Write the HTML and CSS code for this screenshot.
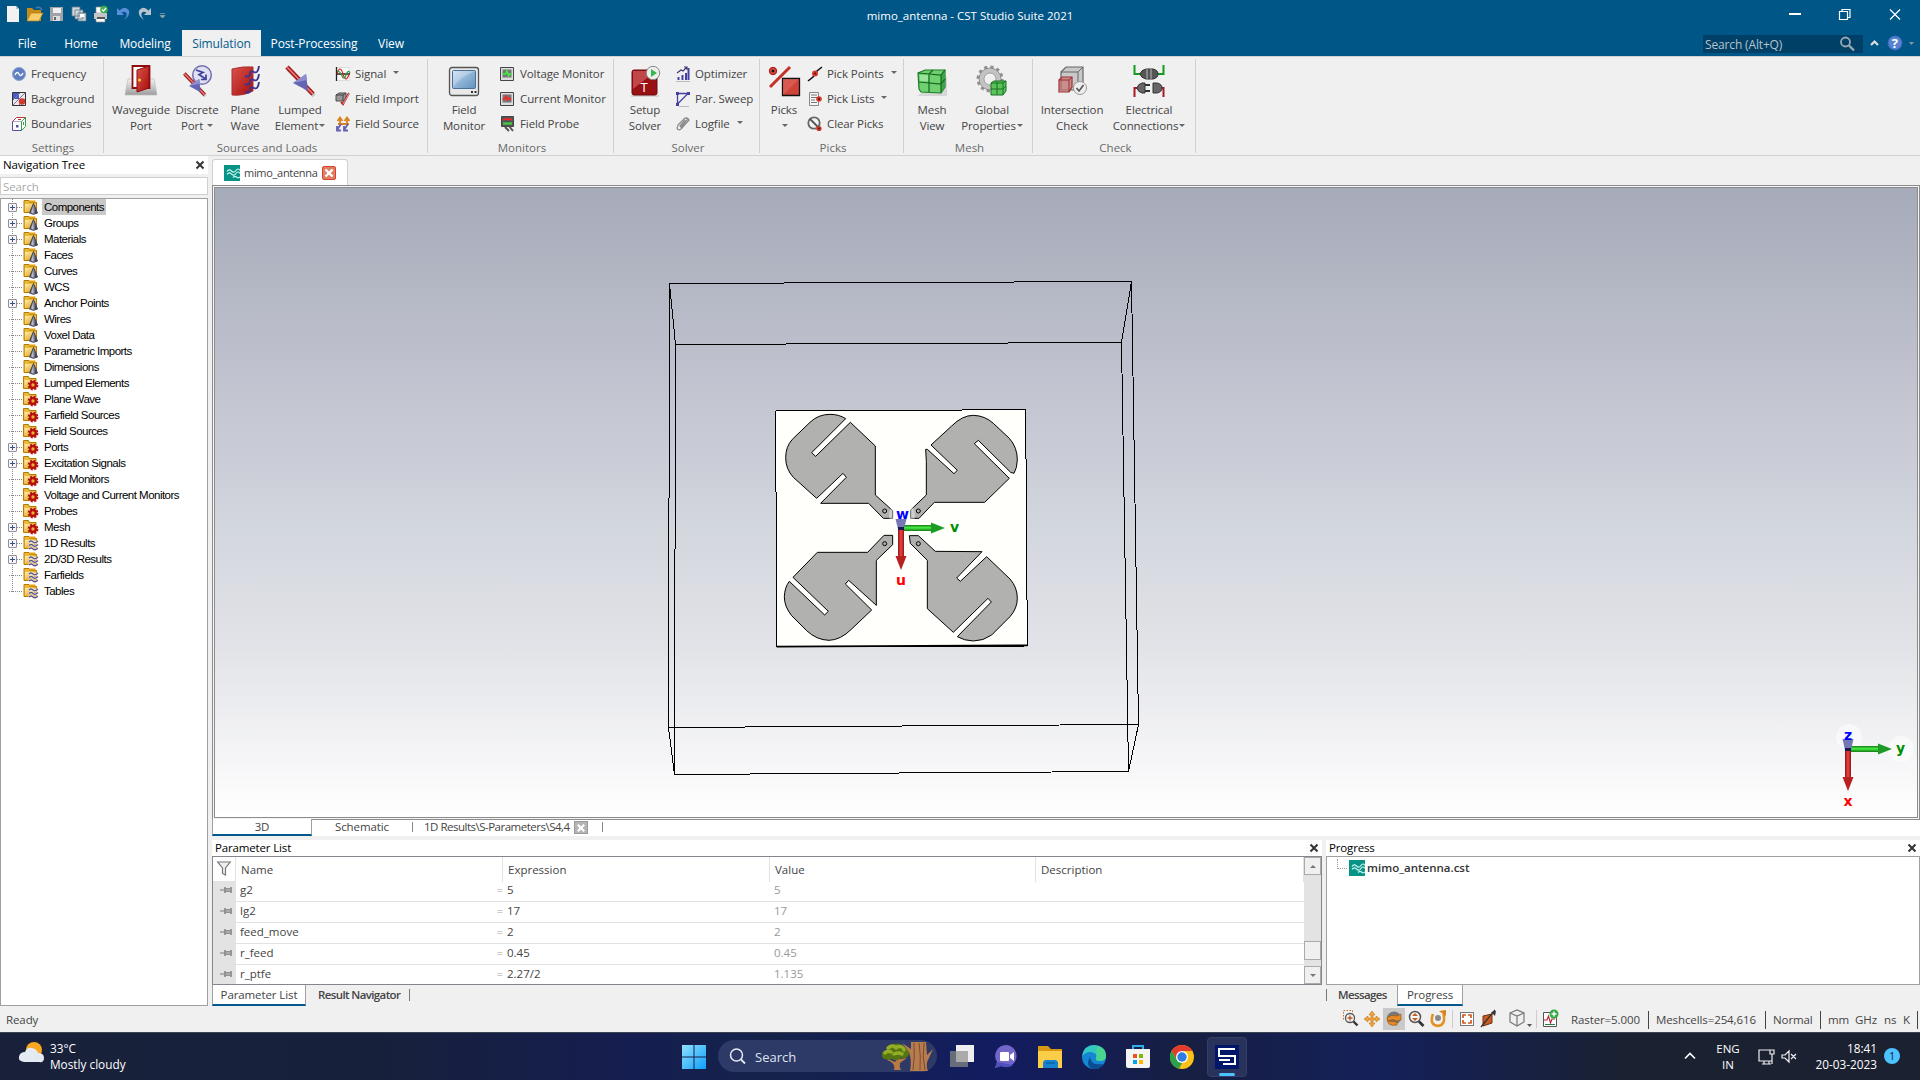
FILE: index.html
```html
<!DOCTYPE html>
<html lang="en">
<head>
<meta charset="utf-8">
<title>mimo_antenna - CST Studio Suite 2021</title>
<link rel="stylesheet" href="styles.css">
</head>
<body>
<svg class="defs" width="0" height="0">
  <defs>
    <linearGradient id="gold" x1="0" y1="0" x2="1" y2="1"><stop offset="0" stop-color="#fff0ae"/><stop offset="1" stop-color="#d8980f"/></linearGradient>
    <linearGradient id="red" x1="0" y1="0" x2="1" y2="1"><stop offset="0" stop-color="#d9544c"/><stop offset="1" stop-color="#a80c0c"/></linearGradient>
    <linearGradient id="metal" x1="0" y1="0" x2="0" y2="1"><stop offset="0" stop-color="#f4f4f4"/><stop offset="1" stop-color="#9d9d9d"/></linearGradient>
    <linearGradient id="screen" x1="0" y1="0" x2="1" y2="1"><stop offset="0" stop-color="#c6dcf0"/><stop offset=".5" stop-color="#8fb4d6"/><stop offset="1" stop-color="#5f92be"/></linearGradient>
    <linearGradient id="barrel" x1="0" y1="0" x2="1" y2="0"><stop offset="0" stop-color="#8e1414"/><stop offset=".5" stop-color="#f04444"/><stop offset="1" stop-color="#8e1414"/></linearGradient>
    <linearGradient id="barrelg" x1="0" y1="0" x2="0" y2="1"><stop offset="0" stop-color="#157a15"/><stop offset=".45" stop-color="#44ee44"/><stop offset="1" stop-color="#157a15"/></linearGradient>
    <symbol id="folder" viewBox="0 0 16 16"><path d="M1 13.500V1.500h5l1 2h6.500v10z" fill="#e9b83f" stroke="#b87a00"/><path d="M2 12.500V5h11v7.500z" fill="url(#gold)"/><path d="M6.500 1.500h6v2h-6z" fill="#e6a411"/></symbol>
    <symbol id="f-cone" viewBox="0 0 16 16"><use href="#folder"/><path d="M10.500 4.500l4 9.500q-4 2.500-8 0z" fill="#70728a" stroke="#44444c" stroke-width="1"/><path d="M10.500 6v8.500l-2.300-.5z" fill="#b9bbd2"/><path d="M12 9l2 5-2 1z" fill="#44454f"/></symbol>
    <symbol id="f-gear" viewBox="0 0 16 16"><path d="M.5 13.500V1.500h5l1 2H13v10z" fill="#e9b83f" stroke="#b87a00"/><path d="M1.500 12.500V5h11v7.500z" fill="url(#gold)"/><circle cx="10" cy="10" r="4.300" fill="none" stroke="#b81414" stroke-width="2.200" stroke-dasharray="2 1.377"/><circle cx="10" cy="10" r="2.800" fill="none" stroke="#b80e0e" stroke-width="2.200"/></symbol>
    <symbol id="f-wave" viewBox="0 0 16 16"><use href="#folder"/><path d="M6 7q2-2 4 0t5-1M6 10.500q2-2 4 0t5-1M6 14q2-2 4 0t5-1" fill="none" stroke="#fff" stroke-width="2.300"/><path d="M6 7q2-2 4 0t5-1M6 10.500q2-2 4 0t5-1M6 14q2-2 4 0t5-1" fill="none" stroke="#5d5590" stroke-width="1.300"/></symbol>
    <symbol id="cst" viewBox="0 0 16 16"><path fill="#079487" d="M0 0h16v16H0z"/><path d="M3 6.500q2-3 4.500-.5t4.500-.5 4 0M3 9.500q2-3 4.500-.5t4.500-.5 4 0M9 12.500q2-2 3.500-.5t3.500 0" fill="none" stroke="#cdf3ee" stroke-width="1.200"/></symbol>
    <symbol id="x" viewBox="0 0 10 10"><path d="M1.500 1.500l7 7M8.500 1.500l-7 7" stroke="#333" stroke-width="2"/></symbol>
    <symbol id="pin" viewBox="0 0 12 8"><path d="M0 4h5" stroke="#8a8a8a" stroke-width="1.200"/><path d="M5 1v6M11 1v6" stroke="#777" stroke-width="1.300"/><path d="M5 2.500h6v3H5z" fill="#aaa" stroke="#858585" stroke-width=".8"/></symbol>
    <symbol id="lump" viewBox="0 0 32 32"><path d="M4 4l26 27" stroke="#777" stroke-width="4" opacity=".35"/><path d="M3 2l26 27" stroke="#a51313" stroke-width="4.600"/><path d="M3 2l26 27" stroke="#e58080" stroke-width="1.800"/><path d="M9 18l13-9 2 17z" fill="#6464b4"/><path d="M9 18l13-9 1 6z" fill="#8d8dd0"/></symbol>
  </defs>
</svg>
<div class="app">
<header class="top">
  <div class="titlebar">
    <div class="quick">
      <svg viewBox="0 0 160 22" width="160" height="22">
        <path d="M1 1h9l3 3v13H1z" fill="#f2f2f2"/><path d="M10 1v3h3" fill="#bbb"/>
        <path d="M21 16V3h5l2 2h7v11z" fill="#c98b16"/><path d="M21 16l4-8h12l-4 8z" fill="#f5cd6c" stroke="#b57c12" stroke-width=".7"/><path d="M30 3q4-2 6 2" fill="none" stroke="#4b77a8" stroke-width="1.500"/>
        <path d="M44 2h13v14H44z" fill="#a0a4a8"/><path d="M47 3h8v5h-8z" fill="#eee"/><path d="M47 11h7v5h-7z" fill="#ddd"/><path d="M48 12h2v3h-2z" fill="#666"/>
        <path d="M66 2h8v9h-8zM69 5h8v9h-8zM72 8h8v8h-8z" fill="#d5d8db" stroke="#60788b" stroke-width=".8"/><path d="M74 9h4v3h-4z" fill="#fff"/>
        <path d="M90 2h9v6h-9zM90 12h9v5h-9z" fill="#fff" stroke="#888" stroke-width=".7"/><path d="M88 8h13v6H88z" fill="#c3c5c7"/><path d="M91 12h8v2h-8z" fill="#555"/><circle cx="98" cy="4.500" r="3.800" fill="#3eaf4b"/><path d="M96 4.500l1.500 1.500 2.500-3" fill="none" stroke="#fff" stroke-width="1.200"/>
        <path d="M111 3v7h7l-2.500-2.500q4-2 5 1 1 3-3 6.500 7-4 5.500-9.500Q119 0 113.500 5.500z" fill="#5b8fda"/>
        <path d="M145 3v7h-7l2.500-2.500q-4-2-5 1-1 3 3 6.500-7-4-5.500-9.500Q137 0 142.500 5.500z" fill="#b9c2ca"/>
        <path d="M154 8.500h5M154 10.500h5l-2.500 2.500z" stroke="#9aa5ad" fill="#9aa5ad" stroke-width=".7"/>
      </svg>
    </div>
    <div class="title">mimo_antenna - CST Studio Suite 2021</div>
    <div class="winbtns">
      <svg viewBox="0 0 130 20" width="130" height="20"><path d="M1 9h12" stroke="#fff" stroke-width="2"/><path d="M51.500 6.500h8v8h-8zM54 6V4.500h8v8h-2" fill="none" stroke="#fff" stroke-width="1.200"/><path d="M102 4.500l10 10M112 4.500l-10 10" stroke="#fff" stroke-width="1.200"/></svg>
    </div>
  </div>
  <nav class="tabs">
    <span class="tab t1">File</span><span class="tab t2">Home</span><span class="tab t3">Modeling</span><span class="tab t4 on">Simulation</span><span class="tab t5">Post-Processing</span><span class="tab t6">View</span>
    <div class="find"><span>Search (Alt+Q)</span><svg viewBox="0 0 16 16" width="16" height="16"><circle cx="6.500" cy="6" r="4.500" fill="none" stroke="#9aa9b4" stroke-width="1.800"/><path d="M10 9.500l5 5" stroke="#9aa9b4" stroke-width="2.400"/></svg></div>
    <svg class="help" viewBox="0 0 46 18" width="46" height="18"><path d="M1 10l3.500-3.500L8 10" fill="none" stroke="#ddd" stroke-width="2.200"/><circle cx="25" cy="8" r="7" fill="#5682d2" stroke="#3b66b6"/><text x="21.700" y="13" class="q">?</text><path d="M39 7h5l-2.500 3z" fill="#8897a5"/></svg>
  </nav>
</header>

<section class="ribbon">
  <div class="group g1">
    <div class="tools">
      <div class="smalls">
        <div class="sm"><svg viewBox="0 0 16 16"><circle cx="8" cy="8" r="6.500" fill="#5f7fc0" stroke="#8aa2d4"/><path d="M4 9q2-4.500 4-1t4-1" fill="none" stroke="#fff" stroke-width="1.400"/></svg><span>Frequency</span></div>
        <div class="sm"><svg viewBox="0 0 16 16"><path d="M1.500 1.500h13v13h-13z" fill="#e8e8ee" stroke="#333"/><path d="M2 2h6v6H2z" fill="#4d59c4"/><path d="M2 14L14 2M2 9l7-7M8 14l6-6" stroke="#7a7a99"/><circle cx="11" cy="10.500" r="3.200" fill="#d3392d"/></svg><span>Background</span></div>
        <div class="sm"><svg viewBox="0 0 16 16"><path d="M1.500 5.500h9v9h-9z" fill="#fff" stroke="#5651a5"/><path d="M1.500 5.500l4-4h9l-4 4" fill="#fff" stroke="#b83838"/><path d="M14.500 1.500v9l-4 4v-9z" fill="#fff" stroke="#36a04a"/><path d="M5 9h2.500v2.500H5z" fill="#5651a5"/><path d="M7 3h3v1H7z" fill="#b83838"/><path d="M12 6h1v3h-1z" fill="#36a04a"/></svg><span>Boundaries</span></div>
      </div>
    </div>
    <div class="cap">Settings</div>
  </div>
  <div class="group g2">
    <div class="tools">
      <div class="big b74"><svg viewBox="0 0 32 32"><path d="M3 14h26l3 16H0z" fill="url(#metal)" stroke="#bbb" stroke-width=".7"/><path d="M7.500 1h17v22h-17z" fill="#fff" stroke="#8f0d0d" stroke-width="1.800"/><path d="M12 5l12-4v22l-12 4z" fill="url(#red)" stroke="#8f0d0d"/><circle cx="14.500" cy="15" r="1.600" fill="#ffcf31"/></svg><span>Waveguide</span><span>Port</span></div>
      <div class="big b38"><svg viewBox="0 0 32 32"><circle cx="21" cy="10" r="9.300" fill="#dcdcf4" fill-opacity=".8" stroke="#7471b0" stroke-width="1.500"/><use href="#lump" x="1" y="7" width="25" height="25"/><path d="M15 5l7 2.500-4 2 6 4m-4 1h5v-5" fill="none" stroke="#43409a" stroke-width="1.700"/></svg><span>Discrete</span><span>Port <i></i></span></div>
      <div class="big b58"><svg viewBox="0 0 32 32"><path d="M3 4q11-3 21-2v24q-9 5-21 4z" fill="url(#red)" stroke="#a93030"/><path d="M30 1q-1 8-5 6t-4 2-5 2M30 9q-1 8-5 6t-4 2-5 2M30 17q-1 8-5 6t-4 2-5 2" fill="none" stroke="#3a3590" stroke-width="1.900"/></svg><span>Plane</span><span>Wave</span></div>
      <div class="big b52"><svg viewBox="0 0 32 32"><use href="#lump" width="32" height="32"/></svg><span>Lumped</span><span>Element<i></i></span></div>
      <div class="smalls s-a">
        <div class="sm"><svg viewBox="0 0 16 16"><path d="M1.500 1.500h13v13h-13z" fill="#fafafa" stroke="#ccc" stroke-width=".6"/><path d="M1.500 1v14M1 8h14" stroke="#222" stroke-width="1.300"/><path d="M2 8q3-10 6 0t6 0" fill="none" stroke="#d22" stroke-width="1.200"/><path d="M2 5q3 0 5 5t4-1 4-2" fill="none" stroke="#2a9c42" stroke-width="1.200"/></svg><span>Signal</span><i class="gap"></i></div>
        <div class="sm"><svg viewBox="0 0 16 16"><path d="M1 4l3-2h7v6l-3 2H1z" fill="#999" stroke="#4c4c4c"/><path d="M1 4h7v6M8 4l3-2" fill="none" stroke="#444"/><path d="M14 2l-6 11-2-2" fill="none" stroke="#b42525" stroke-width="2"/><path d="M15 1l-7 12" stroke="#eee" stroke-width=".6"/></svg><span>Field Import</span></div>
        <div class="sm"><svg viewBox="0 0 16 16"><path d="M5 8V2M2.500 5L5 1.500 7.500 5M12 8V2M9.500 5L12 1.500 14.500 5M3 8h11" fill="none" stroke="#d9821c" stroke-width="1.800"/><path d="M6 8l-4 6M2 10v4.500h4M13 8l-4 6M9 10v4.500h4" fill="none" stroke="#6360b5" stroke-width="1.800"/></svg><span>Field Source</span></div>
      </div>
    </div>
    <div class="cap">Sources and Loads</div>
  </div>
  <div class="group g3">
    <div class="tools">
      <div class="big b72"><svg viewBox="0 0 32 32"><rect x="1.500" y="2.500" width="29" height="28" rx="2.500" fill="#e9e9e9" stroke="#555" stroke-width="1.300"/><rect x="4.500" y="5.500" width="23" height="18" rx="1" fill="url(#screen)" stroke="#4d6e96"/><path d="M5 6h22Q12 12 5 22z" fill="#fff" opacity=".25"/><path d="M23 27h2M26.500 27h2" stroke="#333" stroke-width="2"/></svg><span>Field</span><span>Monitor</span></div>
      <div class="smalls s-b">
        <div class="sm"><svg viewBox="0 0 16 16"><path d="M1.500 1.500h13v13h-13z" fill="#ddd" stroke="#444"/><path d="M3.500 3.500h9v8h-9z" fill="#777"/><path d="M3.500 8h3l1.500-3 1.500 5 1-2h2" fill="none" stroke="#3df03d" stroke-width="1.500"/></svg><span>Voltage Monitor</span></div>
        <div class="sm"><svg viewBox="0 0 16 16"><path d="M1.500 1.500h13v13h-13z" fill="#ddd" stroke="#444"/><path d="M3.500 3.500h9v8h-9z" fill="#777"/><path d="M3.500 8h2l1.500-3 1.500 4 1.500-2 2 2" fill="none" stroke="#f22" stroke-width="1.500"/></svg><span>Current Monitor</span></div>
        <div class="sm"><svg viewBox="0 0 16 16"><path d="M2.500.5h12v10h-12z" fill="#555" stroke="#444"/><path d="M4 4q4-2 9 0" stroke="#f22" stroke-width="1.600" fill="none"/><path d="M4 7.500h9" stroke="#3dd33d" stroke-width="2.200"/><path d="M6 11l4 4M10 10l4 5" stroke="#555" stroke-width="2"/></svg><span>Field Probe</span></div>
      </div>
    </div>
    <div class="cap">Monitors</div>
  </div>
  <div class="group g4">
    <div class="tools">
      <div class="big b62"><svg viewBox="0 0 32 32"><path d="M2 31h28" stroke="#bbb"/><rect x="3" y="5" width="25" height="25" rx="2" fill="#981014" stroke="#6d0a0d"/><path d="M4 6h23L4 24z" fill="#d16060" opacity=".7"/><text x="11.500" y="27" class="tee">T</text><circle cx="24" cy="8" r="6.700" fill="#eee" stroke="#888"/><path d="M22 4l6 4-6 4z" fill="#35b94a"/></svg><span>Setup</span><span>Solver</span></div>
      <div class="smalls s-c">
        <div class="sm"><svg viewBox="0 0 16 16"><path d="M3.500 14v-3M7.500 14V9M11 14V7" stroke="#4440a0" stroke-width="2"/><path d="M13.500 14V2" stroke="#4440a0" stroke-width="2"/><path d="M2 7l4-3 2 1 4-4M9 1h3v3" fill="none" stroke="#3d3a70" stroke-width="1.100"/><path d="M1 15.500h14" stroke="#bbb"/></svg><span>Optimizer</span></div>
        <div class="sm"><svg viewBox="0 0 16 16"><path d="M2.500 13V2.500H13L2.500 13" fill="none" stroke="#4440a0" stroke-width="1.300"/><path d="M1 1h3v3H1zM12 1h3v3h-3zM1 12h3v3H1z" fill="#4440a0"/><path d="M4 15.500h10" stroke="#bbb"/></svg><span>Par. Sweep</span></div>
        <div class="sm"><svg viewBox="0 0 16 16"><path d="M4 8l6-6q3-1 4 2l-8 9q-3 2-4-1l1-3 7-7q3 0 2 2l-6 7-1-1 5-6" fill="none" stroke="#888" stroke-width="1.200"/></svg><span>Logfile</span><i class="gap"></i></div>
      </div>
    </div>
    <div class="cap">Solver</div>
  </div>
  <div class="group g5">
    <div class="tools">
      <div class="big b48"><svg viewBox="0 0 32 32"><path d="M2 22L22 2" stroke="#c63027" stroke-width="3"/><circle cx="5" cy="6" r="3.700" fill="#d04436" stroke="#a91e1e"/><circle cx="5" cy="6" r="1.300" fill="#111"/><path d="M14.500 13.500h17v17h-17z" fill="#cf4339" stroke="#111" stroke-width="1.300"/><path d="M15 14h16L15 30z" fill="#e06b60" opacity=".6"/></svg><span>Picks</span><span class="only"><i></i></span></div>
      <div class="smalls s-d">
        <div class="sm"><svg viewBox="0 0 16 16"><path d="M1 15l5-4 4-6 5-4" stroke="#111" stroke-width="1.600" fill="none"/><circle cx="8" cy="7.500" r="3" fill="#d3392d"/><circle cx="8" cy="7.500" r="1" fill="#511"/></svg><span>Pick Points</span><i class="gap"></i></div>
        <div class="sm"><svg viewBox="0 0 16 16"><path d="M2.500 1.500h9v13h-9z" fill="#f6f6f6" stroke="#888"/><path d="M4 4h6M4 6.500h6M4 9h4M4 11.500h6" stroke="#777"/><circle cx="12" cy="8" r="2.800" fill="#d3392d"/><circle cx="12" cy="8" r="1" fill="#511"/></svg><span>Pick Lists</span><i class="gap"></i></div>
        <div class="sm"><svg viewBox="0 0 16 16"><circle cx="7" cy="7" r="5.700" fill="#f3f3f3" stroke="#666" stroke-width="1.800"/><path d="M3 3l9 9" stroke="#555" stroke-width="1.800"/><circle cx="12" cy="12.500" r="2.600" fill="#d3392d"/><circle cx="12" cy="12.500" r=".9" fill="#511"/></svg><span>Clear Picks</span></div>
      </div>
    </div>
    <div class="cap">Picks</div>
  </div>
  <div class="group g6">
    <div class="tools">
      <div class="big b56"><svg viewBox="0 0 32 32"><path d="M1 31h30V12z" fill="#bbb" opacity=".5"/><path d="M2 8l7-3h20v17l-4 6-20-1-2-3z" fill="#6ed06e" stroke="#1b7c27" stroke-width="1.200"/><path d="M25 10l4-5v17l-4 6z" fill="#3fa648"/><path d="M2 8l23 2 4-5M25 10v18M3 17l22 2 4-5M13 9v18M13 9l4-4" fill="none" stroke="#17691f" stroke-width="1.200"/><path d="M4 10h8v6H4z" fill="#b4f0b4" opacity=".6"/></svg><span>Mesh</span><span>View</span></div>
      <div class="big b64"><svg viewBox="0 0 32 32"><circle cx="14" cy="14" r="12" fill="none" stroke="#909090" stroke-width="3" stroke-dasharray="3.200 3.083"/><circle cx="14" cy="14" r="8.500" fill="none" stroke="#c3c3c3" stroke-width="5"/><circle cx="14" cy="14" r="11" fill="none" stroke="#777" stroke-width=".7"/><circle cx="14" cy="14" r="6" fill="none" stroke="#888" stroke-width=".7"/><path d="M15 18l3-2h12v10l-3 4H15z" fill="#5bc35b" stroke="#187323"/><path d="M15 18h12l3-2M27 18v12M15 24h12l3-3M21 17v13" fill="none" stroke="#187323"/></svg><span>Global</span><span>Properties<i></i></span></div>
    </div>
    <div class="cap">Mesh</div>
  </div>
  <div class="group g7">
    <div class="tools">
      <div class="big b78"><svg viewBox="0 0 32 32"><path d="M5 7l5-5h17v16l-5 7H5z" fill="#c9c9c9" stroke="#666" stroke-width="1.200"/><path d="M5 7h17v17M22 7l5-5" fill="none" stroke="#666"/><path d="M3 15l3-3h10v10l-3 5H3z" fill="#c96969" fill-opacity=".6" stroke="#9d2f2f" stroke-width="1.200"/><path d="M3 15h10v12M13 15l3-3" fill="none" stroke="#9d2f2f"/><circle cx="24" cy="23" r="6.500" fill="#eee" stroke="#999"/><path d="M20.500 23l2.500 3 4.500-6" fill="none" stroke="#555" stroke-width="1.600"/></svg><span>Intersection</span><span>Check</span></div>
      <div class="big b76"><svg viewBox="0 0 32 32"><path d="M1.500 0v9h7M30.500 0v9h-7" fill="none" stroke="#149a22" stroke-width="2"/><path d="M7 9q1-4 6-5h7q5 1 5 5t-5 5h-7q-5-1-6-5z" fill="#555" stroke="#333"/><path d="M14 4v10M18 4v10" stroke="#bbb"/><path d="M1.500 32v-9h5M30.500 32v-9h-3" fill="none" stroke="#a81a22" stroke-width="2"/><path d="M4 23q1-4 5-5h3v10H9q-4-1-5-5zM20 18h4q5 1 5 5t-5 5h-4z" fill="#666" stroke="#333"/><path d="M12 20h5M12 26h5" stroke="#333" stroke-width="2"/></svg><span>Electrical</span><span>Connections<i></i></span></div>
    </div>
    <div class="cap">Check</div>
  </div>
</section>

<main class="work">
  <aside class="nav">
    <div class="phead"><span>Navigation Tree</span><svg width="10" height="10"><use href="#x"/></svg></div>
    <div class="nsearch">Search</div>
    <div class="tree">
      <div class="node exp sel first"><b></b><svg><use href="#f-cone"/></svg><span>Components</span></div>
      <div class="node exp"><b></b><svg><use href="#f-cone"/></svg><span>Groups</span></div>
      <div class="node exp"><b></b><svg><use href="#f-cone"/></svg><span>Materials</span></div>
      <div class="node"><b></b><svg><use href="#f-cone"/></svg><span>Faces</span></div>
      <div class="node"><b></b><svg><use href="#f-cone"/></svg><span>Curves</span></div>
      <div class="node"><b></b><svg><use href="#f-cone"/></svg><span>WCS</span></div>
      <div class="node exp"><b></b><svg><use href="#f-cone"/></svg><span>Anchor Points</span></div>
      <div class="node"><b></b><svg><use href="#f-cone"/></svg><span>Wires</span></div>
      <div class="node"><b></b><svg><use href="#f-cone"/></svg><span>Voxel Data</span></div>
      <div class="node"><b></b><svg><use href="#f-cone"/></svg><span>Parametric Imports</span></div>
      <div class="node"><b></b><svg><use href="#f-cone"/></svg><span>Dimensions</span></div>
      <div class="node"><b></b><svg><use href="#f-gear"/></svg><span>Lumped Elements</span></div>
      <div class="node"><b></b><svg><use href="#f-gear"/></svg><span>Plane Wave</span></div>
      <div class="node"><b></b><svg><use href="#f-gear"/></svg><span>Farfield Sources</span></div>
      <div class="node"><b></b><svg><use href="#f-gear"/></svg><span>Field Sources</span></div>
      <div class="node exp"><b></b><svg><use href="#f-gear"/></svg><span>Ports</span></div>
      <div class="node exp"><b></b><svg><use href="#f-gear"/></svg><span>Excitation Signals</span></div>
      <div class="node"><b></b><svg><use href="#f-gear"/></svg><span>Field Monitors</span></div>
      <div class="node"><b></b><svg><use href="#f-gear"/></svg><span>Voltage and Current Monitors</span></div>
      <div class="node"><b></b><svg><use href="#f-gear"/></svg><span>Probes</span></div>
      <div class="node exp"><b></b><svg><use href="#f-gear"/></svg><span>Mesh</span></div>
      <div class="node exp"><b></b><svg><use href="#f-wave"/></svg><span>1D Results</span></div>
      <div class="node exp"><b></b><svg><use href="#f-wave"/></svg><span>2D/3D Results</span></div>
      <div class="node"><b></b><svg><use href="#f-wave"/></svg><span>Farfields</span></div>
      <div class="node last"><b></b><svg><use href="#f-wave"/></svg><span>Tables</span></div>
    </div>
  </aside>
  <div class="right">
    <div class="docs"><div class="doc"><svg width="16" height="16"><use href="#cst"/></svg><span>mimo_antenna</span><em><svg width="10" height="10" viewBox="0 0 10 10"><path d="M1.500 1.500l7 7M8.500 1.500l-7 7" stroke="#fff" stroke-width="2.400"/></svg></em></div></div>
    <div class="frame"><div class="view">
      <svg viewBox="215 188 1702 629" width="1702" height="629">
        <g fill="none" stroke="#000" shape-rendering="crispEdges">
          <path d="M669.500 283.500L1131.500 281.500L1138.500 724.500L668.500 727.500Z"/>
          <path d="M675.500 344.500L1121.500 342.500L1128.500 771.500L674.500 774.500Z"/>
          <path d="M669.500 283.500L675.500 344.500M1131.500 281.500L1121.500 342.500M1138.500 724.500L1128.500 771.500M668.500 727.500L674.500 774.500"/>
        </g>
        <g transform="translate(760 390) scale(.33333)" stroke="#000" stroke-width="3">
          <path d="M47 63L797 59L802 768L50 771Z" fill="#fffffb" shape-rendering="crispEdges"/>
          <path d="M50 770L802 766" stroke-width="5"/>
          <g fill="#b1b1af">
            <path d="M271 97L346 168V315L398 362V385H370L326 340H182L259 262L249 250L170 325L100 262Q77 237 77 203Q77 170 97 148L150 97Q175 73 210 73Q237 73 257 86L155 188L167 199Z"/>
            <path d="M513 165L575 108Q607 76 640 76Q675 77 700 100L748 145Q772 172 772 210Q771 235 762 250L752 247L655 151L643 161L748 265L674 337H523L477 385H452V360L499 315V215L497 178L502 178L582 251L592 241Z"/>
            <path d="M99 562L172 487H323L372 436H398V464L349 511V646L266 571L256 582L335 660L275 717Q242 750 207 751Q170 750 140 722L95 677Q73 650 73 620Q74 592 88 574L194 675L205 664Z"/>
            <path d="M666 485L590 564L601 574L680 500L750 567Q772 592 772 625Q772 655 750 680L695 735Q670 753 640 753Q612 752 592 740L694 636L684 625L580 727L502 656V511L451 460L448 437H475L526 484Z"/>
          </g>
          <g fill="none"><circle cx="374" cy="363" r="6"/><circle cx="475" cy="363" r="6"/><circle cx="374" cy="461" r="6"/><circle cx="475" cy="461" r="6"/></g>
        </g>
        <g transform="translate(901 528)">
          <circle cx="1" cy="-13" r="13" fill="#fff" opacity=".4"/>
          <path d="M0-3h30v6H0z" fill="url(#barrelg)"/><path d="M30-5.500L44 0 30 5.500z" fill="#1d9a26"/>
          <path d="M-3 0h6v28h-6z" fill="url(#barrel)"/><path d="M-5.500 28L0 42 5.500 28z" fill="#b81f1f"/>
          <path d="M-5.500-9h11L3 1h-6z" fill="#7577b4"/><path d="M-3-1h6v3h-6z" fill="#1d1750"/>
          <text x="-5" y="-9" fill="#00f">w</text><text x="49" y="4" fill="#008f00">v</text><text x="-5" y="57" fill="#f00">u</text>
        </g>
        <g transform="translate(1848 749)">
          <circle cx="1" cy="-12" r="13" fill="#fff" opacity=".5"/><circle cx="53" cy="0" r="13" fill="#fff" opacity=".5"/>
          <path d="M0-3h30v6H0z" fill="url(#barrelg)"/><path d="M30-5.500L44 0 30 5.500z" fill="#1d9a26"/>
          <path d="M-3 0h6v28h-6z" fill="url(#barrel)"/><path d="M-5.500 28L0 42 5.500 28z" fill="#b81f1f"/>
          <path d="M-5.500-10h11L3 1h-6z" fill="#7577b4"/><path d="M-3-1h6v3h-6z" fill="#1d1750"/>
          <text x="-4" y="-9" fill="#00f">z</text><text x="48" y="4" fill="#008f00">y</text><text x="-4.500" y="57" fill="#f00">x</text>
        </g>
      </svg>
    </div></div>
    <div class="vtabs"><span class="vt on">3D</span><span class="vt sch">Schematic</span><span class="vt res">1D Results\S-Parameters\S4,4 <em><svg width="8" height="8" viewBox="0 0 10 10"><path d="M1 1l8 8M9 1l-8 8" stroke="#fff" stroke-width="2.600"/></svg></em></span></div>
    <div class="lower">
      <section class="params">
        <div class="phead"><span>Parameter List</span><svg width="10" height="10"><use href="#x"/></svg></div>
        <div class="table">
          <div class="rows">
            <div class="tr th"><span><svg width="14" height="15" viewBox="0 0 14 15"><path d="M.7 1h12.500L8.500 7v7l-3-1.500V7z" fill="#eee" stroke="#777" stroke-width="1.200"/></svg></span><span>Name</span><span>Expression</span><span>Value</span><span>Description</span></div>
            <div class="tr"><span><svg width="12" height="8"><use href="#pin"/></svg></span><span>g2<u>=</u></span><span>5</span><span class="v">5</span><span></span></div>
            <div class="tr"><span><svg width="12" height="8"><use href="#pin"/></svg></span><span>lg2<u>=</u></span><span>17</span><span class="v">17</span><span></span></div>
            <div class="tr"><span><svg width="12" height="8"><use href="#pin"/></svg></span><span>feed_move<u>=</u></span><span>2</span><span class="v">2</span><span></span></div>
            <div class="tr"><span><svg width="12" height="8"><use href="#pin"/></svg></span><span>r_feed<u>=</u></span><span>0.45</span><span class="v">0.45</span><span></span></div>
            <div class="tr"><span><svg width="12" height="8"><use href="#pin"/></svg></span><span>r_ptfe<u>=</u></span><span>2.27/2</span><span class="v">1.135</span><span></span></div>
          </div>
          <div class="scroll"><div class="sb"><i class="up"></i></div><div class="space"></div><div class="sb thumb"></div><div class="space2"></div><div class="sb"><i></i></div></div>
        </div>
        <div class="btabs"><span class="bt on p">Parameter List</span><span class="bt bold rn">Result Navigator</span><span class="bar"></span></div>
      </section>
      <section class="progress">
        <div class="phead"><span>Progress</span><svg width="10" height="10"><use href="#x"/></svg></div>
        <div class="pbox"><div class="pitem"><s></s><svg width="16" height="16"><use href="#cst"/></svg><span>mimo_antenna.cst</span></div></div>
        <div class="btabs"><span class="bar"></span><span class="bt bold ms">Messages</span><span class="bt on pr">Progress</span></div>
      </section>
    </div>
  </div>
</main>

<footer class="status">
  <span class="ready">Ready</span>
  <svg class="sicons" viewBox="0 0 220 24" width="220" height="24">
    <rect x="42" y="1" width="22" height="22" fill="#c9c9c9"/>
    <path d="M2.500 3.500h9v9h-9z" fill="none" stroke="#c66a28" stroke-dasharray="1.500 1.500"/><circle cx="9" cy="11" r="4.500" fill="#f6f6f6" stroke="#555" stroke-width="1.300"/><path d="M6.500 11h5M9 8.500v5" stroke="#c05a20" stroke-width="1.400"/><path d="M12.500 14.500l4 4" stroke="#333" stroke-width="2.400"/>
    <path d="M31 4l3 4h-2v3h3V9l4 3-4 3v-2h-3v3h2l-3 4-3-4h2v-3h-3v2l-4-3 4-3v2h3V8h-2z" fill="#eda23b" stroke="#c87618" stroke-width=".6"/>
    <ellipse cx="53" cy="11" rx="7" ry="6.500" fill="#777"/><path d="M46 11q4-4 10-2l4-2v6l-4 1q-5-3-9 0l9 1v3q-10 2-10-7" fill="#e88a25" stroke="#8e4a10" stroke-width=".6"/>
    <circle cx="74" cy="10" r="5.500" fill="#f6f6f6" stroke="#555" stroke-width="1.500"/><path d="M71 9l3-3 3 3zM71 11l3 3 3-3z" fill="#c95a20"/><path d="M78 14.500l4.500 4.500" stroke="#333" stroke-width="2.600"/>
    <path d="M92 7q-4 11 5 12 8-1 5.500-12" fill="none" stroke="#e39222" stroke-width="2.600"/><path d="M98 4l7-1v6z" fill="#d9821c"/><circle cx="97" cy="11" r="3" fill="#888"/>
    <path d="M111.500 3v18M195.500 3v18" stroke="#ccc"/>
    <rect x="119.500" y="5.500" width="13" height="13" fill="#fff" stroke="#777"/><path d="M122 11V8h3M130 11V8h-3M122 13v3h3M130 13v3h-3" fill="none" stroke="#cf5b20" stroke-width="1.700"/>
    <path d="M142 9l9-2v9l-9 3z" fill="#c95c20" stroke="#6d3213"/><path d="M140 20l14-17" stroke="#333" stroke-width="1.300"/><path d="M150 5l5-1-1 5z" fill="#333"/>
    <path d="M169 6l7-3 7 3v9l-7 4-7-4zM169 6l7 3 7-3M176 9v10" fill="#efefef" stroke="#777" stroke-width="1.200"/><path d="M186 17h5l-2.500 3z" fill="#555"/>
    <path d="M202.500 5.500h13v14h-13z" fill="#fff" stroke="#555"/><path d="M203 13h3l1.500-4 2 7 1.500-4h3" fill="none" stroke="#b23" stroke-width="1.100"/><path d="M204 17.500h10" stroke="#2a7d3e"/><circle cx="213" cy="7" r="4.500" fill="#35a945"/><path d="M210.500 7h5M213 4.500v5" stroke="#fff" stroke-width="1.500"/>
  </svg>
  <span class="st s1">Raster=5.000</span><span class="bar"></span><span class="st s2">Meshcells=254,616</span><span class="bar"></span><span class="st s3">Normal</span><span class="bar"></span><span class="st s4">mm</span><span class="st s5">GHz</span><span class="st s6">ns</span><span class="st s7">K</span><span class="bar"></span>
</footer>

<footer class="taskbar">
  <div class="weather"><svg viewBox="0 0 28 26" width="28" height="26"><circle cx="16" cy="10" r="8" fill="#f6a821"/><path d="M6 22q-6-1-5-5.500T7 12q2-5 7-4t6 5q6 0 6 5t-5 4z" fill="#e4eaf2"/></svg><div><span>33°C</span><span>Mostly cloudy</span></div></div>
  <div class="apps">
    <svg class="start" viewBox="0 0 24 24" width="24" height="24"><path d="M0 0h11.500v11.500H0zM12.500 0H24v11.500H12.500zM0 12.500h11.500V24H0zM12.500 12.500H24V24H12.500z" fill="url(#win)"/><defs><linearGradient id="win" x1="0" y1="0" x2="1" y2="1"><stop offset="0" stop-color="#8fe0fd"/><stop offset="1" stop-color="#109ffa"/></linearGradient></defs></svg>
    <div class="tsearch"><svg width="17" height="17" viewBox="0 0 17 17"><circle cx="7.500" cy="7" r="6" fill="none" stroke="#e4e8f2" stroke-width="1.500"/><path d="M12 11.500l4 4" stroke="#e4e8f2" stroke-width="1.800"/></svg><span>Search</span>
      <svg class="art" width="54" height="30" viewBox="0 0 54 30"><path d="M13 29q2-7-7-10l1-1 7 3 3-4 2 1 7-1-7 5q-1 4 1 7z" fill="#b87a45"/><path d="M1 15q-1-6 5-6-2-5 6-6 8-2 10 3 7 0 6 6 0 6-8 5-4 4-9 1-9 2-10-3z" fill="#557513"/><path d="M4 12q2-3 6-1M7 7q5-4 8 0M16 6q6-2 7 3M13 13q5-2 8 0" stroke="#93ad25" stroke-width="3.500" fill="none" stroke-linecap="round"/><path d="M29 30q2-10-1-19l-7-9 9 6V1h15l1 13 6-6-4 9q-4 6-1 13z" fill="#b67b4e"/><path d="M33 2q1 14-1 27M38 2q2 12 1 27M43 2q-2 14 1 27" stroke="#7c4b2b" fill="none"/></svg>
    </div>
    <svg class="a1" width="26" height="24" viewBox="0 0 26 24"><path d="M6 0h18v17H6z" fill="#eee"/><path d="M0 6h18v16H0z" fill="#777b80" opacity=".85"/><path d="M6 6h12v11H6z" fill="#aaa"/></svg>
    <svg class="a2" width="26" height="24" viewBox="0 0 26 24"><path d="M12 0a11 11 0 1 1-5 21l-6 2 2-6A11 11 0 0 1 12 0z" fill="#7266c8"/><path d="M1 23l2-6 16 3q-5 4-12 1z" fill="#4f50bd"/><rect x="6" y="7" width="9" height="9" rx="1" fill="#fff"/><path d="M16 10l4-3v9l-4-3z" fill="#fff"/></svg>
    <svg class="a3" width="26" height="24" viewBox="0 0 26 24"><path d="M0 1h10l3 3h11v6H0z" fill="#d89814"/><path d="M0 6h24v17H0z" fill="#fccd49"/><path d="M5 23v-6l2-2h11l2 2v6z" fill="#1683d0"/><path d="M8 18h9" stroke="#0763a8" stroke-width="1.500"/></svg>
    <svg class="a4" width="26" height="24" viewBox="0 0 26 24"><circle cx="12" cy="12" r="12" fill="#1586d4"/><path d="M0 11Q2 0 12 0q12 1 12 11 0 5-6 5-5 0-4-3 2-3-2-5Q6 5 0 11z" fill="#34c6c1"/><path d="M15 1q9 2 9 10 0 5-6 5-5 0-4-3z" fill="#54d977" opacity=".7"/><path d="M8 12q1 9 13 7-3 6-10 5Q3 21 8 12z" fill="#0c4c91"/></svg>
    <svg class="a5" width="26" height="24" viewBox="0 0 26 24"><path d="M7 5V1h10v4" fill="none" stroke="#2eafeb" stroke-width="2"/><path d="M0 4h24v17q0 2-2 2H2q-2 0-2-2z" fill="#f4f4f4"/><path d="M7 9h4v4H7z" fill="#f14f21"/><path d="M13 9h4v4h-4z" fill="#7eb900"/><path d="M7 15h4v4H7z" fill="#00a3ee"/><path d="M13 15h4v4h-4z" fill="#feb800"/></svg>
    <svg class="a6" width="26" height="24" viewBox="0 0 26 24"><circle cx="12" cy="12" r="12" fill="#fbc116"/><path d="M1.600 6a12 12 0 0 1 20.800 0H12l-5 9z" fill="#e33b2e"/><path d="M1.600 6l5.400 9 5 3-3 5.700A12 12 0 0 1 1.600 6z" fill="#2ba24c"/><circle cx="12" cy="12" r="6" fill="#fff"/><circle cx="12" cy="12" r="4.700" fill="#2f7de1"/></svg>
    <div class="active"><svg width="24" height="24" viewBox="0 0 24 24"><path fill="#001769" d="M0 0h24v24H0z"/><path d="M20 4H4v7h16v8H8M4 15h11" fill="none" stroke="#fff" stroke-width="2"/></svg><i></i></div>
  </div>
  <div class="tray">
    <svg class="chev" width="12" height="8" viewBox="0 0 12 8"><path d="M1 6.500l5-5 5 5" fill="none" stroke="#fff" stroke-width="1.600"/></svg>
    <div class="lang"><span>ENG</span><span>IN</span></div>
    <svg class="net" width="40" height="18" viewBox="0 0 40 18"><path d="M12 2H1v11h13V9M4 16h9M6 13v3M11 13v3M12 2h4v4h-4zM14 6v10" fill="none" stroke="#eee" stroke-width="1.200"/><path d="M24 7h3l4-4v11l-4-4h-3zM33 6l5 5M38 6l-5 5" fill="none" stroke="#eee" stroke-width="1.200"/></svg>
    <div class="clock"><span>18:41</span><span>20-03-2023</span></div>
    <div class="badge">1</div>
  </div>
</footer>
</div>
</body>
</html>
```
FILE: styles.css
```css
* { box-sizing: border-box; }
body { margin: 0; font: 11.5px/16px "Open Sans", "Noto Sans", sans-serif; letter-spacing: -.1px; color: #444; background: #f0f0f0; }
.defs { display: block; position: absolute; }
svg { display: block; flex: none; overflow: visible; }
span { white-space: nowrap; }
.app { width: 1920px; height: 1080px; display: flex; flex-direction: column; overflow: hidden; }
.top { height: 56px; background: #005687; color: #fff; }
.titlebar { height: 30px; display: grid; grid-template-columns: 700px 540px 1fr; }
.quick { padding: 5px 0 0 6px; }
.title { text-align: center; line-height: 31px; letter-spacing: 0; }
.winbtns { padding: 5px 0 0 548px; }
.tabs { display: flex; height: 26px; font-size: 12px; letter-spacing: -.1px; line-height: 27px; }
.tab { text-align: center; }
.t1 { width: 54px; } .t2 { width: 54px; } .t3 { width: 74px; } .t4 { width: 79px; } .t5 { width: 106px; } .t6 { width: 48px; }
.tab.on { background: #f0f0f0; color: #005a8c; }
.find { margin: 5px 0 0 1288px; width: 160px; height: 18px; background: #004066; color: #b5c3cd; display: flex; justify-content: space-between; line-height: 18px; padding: 1px 8px 0 2px; letter-spacing: -.15px; }
.help { margin: 5px 0 0 7px; }
.q { font: bold 13px "Open Sans", sans-serif; fill: #fff; }
.tee { font: 13px "Open Sans", sans-serif; fill: #fff; }

.ribbon { height: 100px; display: flex; border-top: 1px solid #d2d2d2; border-bottom: 1px solid #d2d2d2; }
.group { display: flex; flex-direction: column; padding-top: 8px; background: linear-gradient(#d0d0d0, #d0d0d0) no-repeat right 2px / 1px 94px; }
.g1 { width: 104px; } .g2 { width: 324px; } .g3 { width: 186px; } .g4 { width: 146px; } .g5 { width: 144px; } .g6 { width: 129px; } .g7 { width: 163px; }
.tools { display: flex; height: 77px; }
.cap { text-align: center; color: #6a6a6a; line-height: 14px; letter-spacing: 0; padding-left: 2px; }
.big { display: flex; flex-direction: column; align-items: center; }
.big svg { width: 32px; height: 32px; margin-bottom: 5px; }
.b74 { width: 74px; } .b38 { width: 38px; } .b58 { width: 58px; } .b52 { width: 52px; } .b72 { width: 72px; } .b62 { width: 62px; } .b48 { width: 48px; } .b56 { width: 56px; } .b64 { width: 64px; } .b78 { width: 78px; } .b76 { width: 76px; }
.big i, .sm i { display: inline-block; border: 3px solid transparent; border-top-color: #666; border-bottom: 0; margin-left: 1px; vertical-align: 3px; }
.big .only i { margin: 0 0 0 2px; }
.sm i.gap { margin: -3px 0 0 7px; }
.smalls { padding-left: 11px; margin-top: -4px; }
.s-a { padding-left: 9px; } .s-b { padding-left: 0; margin-left: -1px; } .s-c, .s-d { padding-left: 0; margin-left: -1px; }
.sm { height: 25px; display: flex; align-items: center; }
.sm svg { width: 16px; height: 16px; margin-right: 4px; }
.s-b .sm svg { margin-right: 5px; }

.work { height: 850px; display: flex; }
.nav { width: 208px; height: 850px; display: flex; flex-direction: column; }
.phead { height: 16px; background: #fff; color: #000; display: flex; justify-content: space-between; align-items: center; padding: 0 3px; letter-spacing: -.15px; }
.nav .phead { height: 18px; }
.nsearch { margin: 3px 0 3px; height: 18px; border: 1px solid #cfcfcf; background: #fff; color: #aaa; padding-left: 2px; line-height: 17px; }
.tree { flex: 1; background: #fff; border: 1px solid #a0a0a0; padding-left: 7px; font: 11.5px/16px "Liberation Sans", Arial, sans-serif; letter-spacing: -.52px; color: #000; }
.node { height: 16px; display: flex; background: linear-gradient(90deg, #888 50%, transparent 50%) 5px 8px / 2px 1px repeat-x, linear-gradient(#888 50%, transparent 50%) 4px 0 / 1px 2px repeat-y; }
.node.last { background: linear-gradient(90deg, #888 50%, transparent 50%) 5px 8px / 2px 1px repeat-x, repeating-linear-gradient(#888 0 1px, transparent 1px 2px) 4px 0 / 1px 9px no-repeat; }
.node b { width: 9px; height: 9px; margin: 4px 6px 0 0; }
.exp b { border: 1px solid #919191; border-radius: 1px; background: linear-gradient(#36518f, #36518f) center / 5px 1px no-repeat, linear-gradient(#36518f, #36518f) center / 1px 5px no-repeat, #f6f6f6; }
.node svg { width: 16px; height: 16px; background: #fff; }
.node span { padding: 0 2px; background: #fff; flex: 1; box-shadow: -3px 0 #fff; margin-left: 3px; }
.sel span { background: #c8c8c8; flex: none; }
.sel::after { content: ""; flex: 1; background: #fff; }

.right { width: 1712px; padding-left: 4px; }
.docs { height: 29px; padding-top: 3px; }
.doc { width: 136px; height: 26px; background: #fff; border: 1px solid #d0d0d0; border-bottom: 0; border-radius: 3px 3px 0 0; display: flex; align-items: center; padding-left: 11px; gap: 4px; font-size: 11px; letter-spacing: -.3px; }
.doc em { width: 14px; height: 14px; border: 1px solid #d9422c; background: #dd7f65; display: grid; place-items: center; border-radius: 2px; }
.frame { width: 1708px; height: 635px; border: 1px solid #8c8c8c; padding: 1px; background: #f5f5f5; }
.view { height: 631px; border: 1px solid #8c8c8c; background: linear-gradient(#a6abb9 0, #c2c4d0 32%, #d3d7de 55%, #e2e3e8 73%, #fff 100%); }
.view text { font: bold 14px "DejaVu Sans", sans-serif; }
.view svg { overflow: hidden; }
.vtabs { height: 16px; display: flex; background: #fff; line-height: 13px; }
.vt.on { width: 100px; background: #fff; border: 1px solid #a0a0a0; border-top: 0; border-bottom: 2px solid #00588c; text-align: center; margin-top: -1px; padding-top: 1px; }
.sch { width: 100px; text-align: center; }
.res { border: solid #888; border-width: 0 1px; padding-left: 11px; height: 10px; margin-top: 2px; line-height: 9px; width: 191px; display: flex; gap: 4px; letter-spacing: -.5px; }
.res em { width: 14px; height: 13px; background: #b5b5b5; border: 1px solid #999; display: grid; place-items: center; margin-top: -1px; }
.bar { width: 1px; height: 12px; background: #777; }
.lower { display: flex; gap: 4px; padding-top: 4px; }
.params { width: 1110px; } .progress { width: 594px; }
.table { height: 129px; border: 1px solid #85858d; background: #fff; display: flex; overflow: hidden; }
.rows { width: 1091px; }
.tr { display: grid; grid-template-columns: 23px 267px 267px 266px 1fr; height: 21px; line-height: 18px; border-bottom: 1px solid #e2e2e2; letter-spacing: 0; }
.tr span { padding-left: 4px; display: flex; justify-content: space-between; }
.tr > :first-child { background: #e3e3e3; padding: 5px 0 0 7px; }
.tr.th { height: 24px; border: 0; line-height: 25px; }
.th > :first-child { background: #fff; padding: 4px 0 0 4px; }
.th span { border-right: 1px solid #e2e2e2; padding-left: 5px; }
.tr .v { color: #999; }
.tr u { text-decoration: none; color: #aaa; }
.scroll { width: 17px; background: #e3e3e3; display: flex; flex-direction: column; }
.sb { height: 18px; border: 1px solid #aaa; background: #f0f0f0; display: grid; place-items: center; }
.sb i { border: 3px solid transparent; border-top-color: #777; border-bottom: 0; }
.sb i.up { border-top: 0; border-bottom: 3px solid #777; }
.space { height: 66px; } .thumb { height: 19px; } .space2 { flex: 1; }
.btabs { height: 21px; display: flex; line-height: 20px; }
.bt.on { background: #fff; border: 1px solid #a0a0a0; border-top: 0; border-bottom: 2px solid #00588c; text-align: center; }
.bold { font-weight: 600; letter-spacing: -.62px; }
.p { width: 94px; } .rn { width: 103px; padding-left: 12px; } .ms { width: 70px; padding-left: 11px; } .pr { width: 66px; }
.btabs .bar { margin-top: 4px; }
.pbox { height: 129px; border: 1px solid #a0a0a0; background: #fff; padding-left: 9px; }
.pitem { display: flex; padding-top: 3px; }
.pitem s { width: 10px; height: 10px; border: dotted #999; border-width: 0 0 1px 1px; margin: -1px 2px 0 1px; }
.pitem span { font-weight: 600; padding-left: 2px; letter-spacing: 0; color: #333; }

.status { height: 26px; display: flex; padding-top: 1px; line-height: 25px; }
.ready { width: 1341px; padding-left: 6px; }
.sicons { width: 220px; margin-right: 10px; }
.status .bar { height: 18px; margin-top: 4px; background: #444; }
.s1 { width: 77px; } .s2 { width: 116px; padding-left: 7px; } .s3 { width: 54px; padding-left: 7px; } .s4 { width: 34px; padding-left: 7px; } .s5 { width: 29px; } .s6 { width: 19px; } .s7 { width: 14px; }
.taskbar { height: 48px; background: linear-gradient(90deg, #19213a 0, #17203b 20%, #151e50 33%, #15234a 40%, #121c60 52%, #171f42 62%, #14205a 72%, #1a2130 85%, #1b2130 100%); border-top: 1px solid #3b4252; color: #fff; display: flex; letter-spacing: 0; }
.weather { width: 682px; padding: 7px 0 0 18px; display: flex; gap: 4px; font-size: 11.8px; }
.weather div, .lang, .clock { display: flex; flex-direction: column; }
.apps { display: flex; width: 1002px; }
.start { margin: 12px 12px 0 0; }
.tsearch { width: 219px; height: 32px; margin: 7px 13px 0 0; border-radius: 16px; background: #2d3967; display: flex; align-items: center; padding: 0 2px 0 11px; font-size: 13px; color: #dfe3ee; }
.tsearch span { margin: 1px 0 0 9px; }
.art { margin-left: auto; }
.a1, .a2, .a3, .a4, .a5, .a6 { margin: 12px 18px 0 0; }
.a6 { margin-right: 11px; }
.active { width: 40px; height: 40px; margin-top: 4px; border-radius: 4px; background: #28325a; border: 1px solid #343e66; display: flex; flex-direction: column; align-items: center; padding-top: 7px; gap: 4px; }
.active i { width: 16px; height: 3px; border-radius: 2px; background: #4cc2ff; }
.tray { display: flex; }
.chev { margin-top: 19px; }
.lang { width: 40px; margin: 8px 0 0 12px; align-items: center; }
.net { margin: 15px 0 0 10px; }
.clock { width: 79px; margin-top: 7px; align-items: flex-end; font-size: 11.8px; }
.badge { width: 16px; height: 16px; border-radius: 8px; background: #4cc2ff; color: #113; text-align: center; font-size: 10px; margin: 15px 0 0 7px; }
```
